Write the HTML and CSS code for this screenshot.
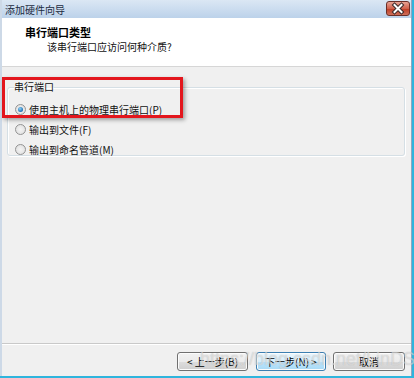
FILE: index.html
```html
<!DOCTYPE html>
<html lang="zh-CN">
<head>
  <meta charset="UTF-8">
  <title>添加硬件向导</title>
  <link rel="stylesheet" href="styles.css">
</head>
<body>
  <div class="screen">
    <div class="window">
      <div class="titlebar">
        <span class="title">添加硬件向导</span>
        <span class="close">
          <svg width="24" height="15" viewBox="0 0 24 15">
            <path d="M8.5 4 L15.5 11 M15.5 4 L8.5 11" stroke="#3a2a2a" stroke-width="4" stroke-linecap="square"/>
            <path d="M8.5 4 L15.5 11 M15.5 4 L8.5 11" stroke="#fff" stroke-width="2" stroke-linecap="square"/>
          </svg>
        </span>
      </div>

      <div class="header">
        <div class="h-title">串行端口类型</div>
        <div class="h-sub">该串行端口应访问何种介质?</div>
      </div>

      <div class="content">
        <fieldset class="group">
          <legend>串行端口</legend>
          <div class="radio checked"><span class="dot"></span>使用主机上的物理串行端口(P)</div>
          <div class="radio"><span class="dot"></span>输出到文件(F)</div>
          <div class="radio"><span class="dot"></span>输出到命名管道(M)</div>
        </fieldset>
        <!-- 红框标注 -->
        <div class="highlight"></div>
      </div>

      <div class="footer">
        <button class="btn">&lt; 上一步(B)</button>
        <button class="btn focus">下一步(N) &gt;</button>
        <button class="btn cancel">取消</button>
        <div class="watermark">https://blog.csdn.net/LinDS</div>
      </div>
    </div>
  </div>
</body>
</html>
```

FILE: styles.css
```css
* { box-sizing: border-box; }
body { margin: 0; background: #fff; font-family: "Noto Sans CJK SC", "Microsoft YaHei", sans-serif; font-size: 10px; color: #111; }

.screen { width: 414px; height: 378px; background: #2fb5dd; padding: 0 2px 2px 0; }
.window { width: 412px; height: 376px; display: flex; flex-direction: column; background: #f0f0f0; border-left: 2px solid #cdd9e7; border-right: 1px solid #8fa7c2; position: relative; }

.titlebar { height: 18px; display: flex; align-items: center; justify-content: space-between; padding: 0 1px 0 3px; background: linear-gradient(#dbe7f4, #bcd2ea); }
.title { font-size: 10px; color: #1b2b3f; }
.close { width: 24px; height: 15px; margin-top: -1px; border: 1px solid #6b2f28; border-radius: 3px; background: linear-gradient(#e8a394, #d0614c 50%, #bd3a22 51%, #d0705a); display: flex; }
.close svg { display: block; margin: -1px; }

.header { height: 49px; background: #fff; border-bottom: 1px solid #d6d6d6; padding: 7px 0 0 23px; }
.h-title { font-size: 11px; font-weight: bold; line-height: 14px; color: #000; }
.h-sub { line-height: 14px; margin-top: 1px; padding-left: 22px; }

.content { flex: 1; padding: 13px 6px 0 5px; }
.group { margin: 0; height: 76px; border: 1px solid #d5dfe5; border-radius: 3px; padding: 5px 0 0 7px; box-shadow: inset 1px 1px #fff, 1px 1px #fff; }
.group legend { padding: 0; margin-left: -1px; line-height: 14px; }
.radio { height: 20px; display: flex; align-items: center; gap: 3px; }
.dot { width: 11px; height: 11px; border-radius: 50%; border: 1px solid #939393; background: radial-gradient(#f4f4f4, #dcdcdc); position: relative; }
.checked .dot::after { content: ""; position: absolute; left: 2px; top: 2px; width: 5px; height: 5px; border-radius: 50%; background: radial-gradient(circle at 40% 35%, #8fd2f5, #1c6fb6 70%, #0d4f8f); }

.highlight { position: absolute; left: 0; top: 77px; width: 181px; height: 41px; border: 3px solid #e3161d; box-shadow: 2px 2px 4px rgba(0,0,0,0.35); }

.footer { height: 33px; border-top: 1px solid #c9c9c9; box-shadow: inset 0 1px #fff; display: flex; align-items: flex-start; padding: 8px 0 0 175px; position: relative; }
.btn { height: 19px; font: inherit; font-size: 10px; color: #000; padding: 0; border: 1px solid #707070; border-radius: 3px; background: linear-gradient(#f2f2f2, #ebebeb 50%, #dddddd 51%, #cfcfcf); box-shadow: inset 0 0 0 1px #fcfcfc; }
.btn:first-child { width: 71px; }
.btn.focus { width: 70px; margin-left: 8px; border-color: #3c7fb1; background: linear-gradient(#eaf6fd, #d9f0fc 50%, #bee6fd 51%, #a7d9f5); }
.btn.cancel { width: 72px; margin-left: 7px; }

.watermark { position: absolute; left: 198px; top: 5px; font-family: "Liberation Sans", Arial, sans-serif; font-size: 18px; color: rgba(255,255,255,0.45); text-shadow: 0 0 1px rgba(120,120,120,0.45); pointer-events: none; white-space: nowrap; }
```
